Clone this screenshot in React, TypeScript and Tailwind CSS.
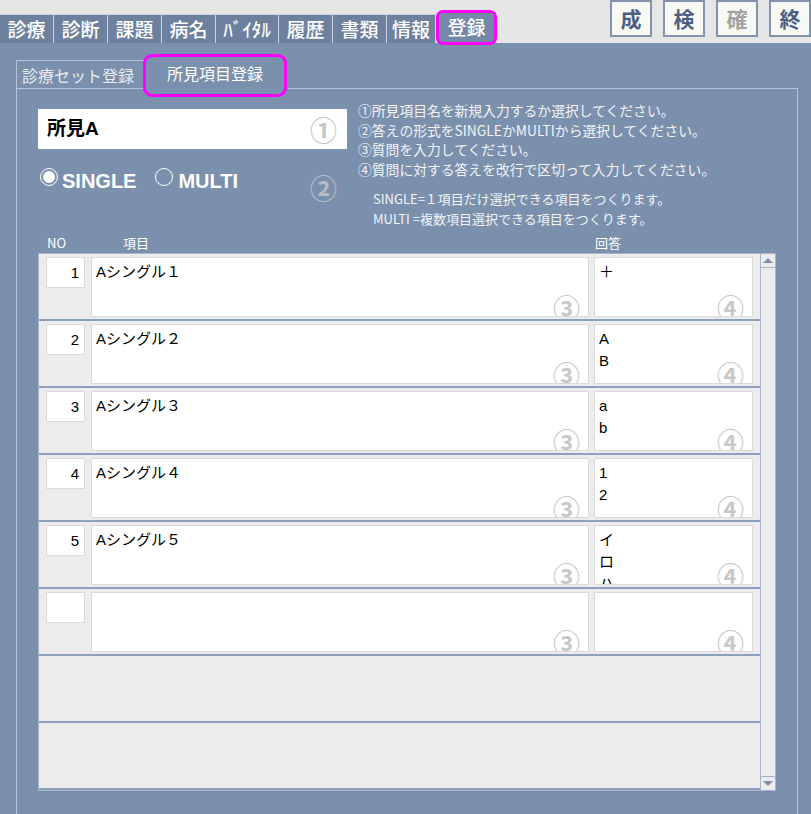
import * as React from 'react';

const tabs = [
  { label: '診療', w: 'w-[54px]' },
  { label: '診断', w: 'w-[54px]' },
  { label: '課題', w: 'w-[54px]' },
  { label: '病名', w: 'w-[54px]' },
  { label: 'ﾊﾞｲﾀﾙ', w: 'w-[63px]' },
  { label: '履歴', w: 'w-[54px]' },
  { label: '書類', w: 'w-[54px]' },
  { label: '情報', w: 'w-[49px]' },
];

const rows: { no: string; item: string; answers: string[]; boxes: boolean }[] = [
  { no: '1', item: 'Aシングル１', answers: ['＋'], boxes: true },
  { no: '2', item: 'Aシングル２', answers: ['A', 'B'], boxes: true },
  { no: '3', item: 'Aシングル３', answers: ['a', 'b'], boxes: true },
  { no: '4', item: 'Aシングル４', answers: ['1', '2'], boxes: true },
  { no: '5', item: 'Aシングル５', answers: ['イ', 'ロ', 'ハ'], boxes: true },
  { no: '', item: '', answers: [], boxes: true },
  { no: '', item: '', answers: [], boxes: false },
  { no: '', item: '', answers: [], boxes: false },
];

const Row = ({ row }: { row: (typeof rows)[number] }) => {
  return (
    <div className="h-[67px] border-b-2 border-[#8da0bd] pt-[3px] pl-[7px] flex">
      {row.boxes && (
        <>
          <div className="w-[39px] h-[31px] bg-white border border-[#dadada] text-right pr-[5px] text-[15px] leading-[29px] text-black">
            {row.no}
          </div>
          <div className="relative overflow-hidden ml-[6px] w-[498px] h-[60px] bg-white border border-[#dadada] pt-[3px] pl-[4px] text-[15px] leading-[22px] text-black">
            {row.item}
            <span className="absolute right-[8px] bottom-[-5px] text-[27px] font-bold leading-none text-[#c8c8c8] font-['Noto_Sans_CJK_JP',sans-serif]">③</span>
          </div>
          <div className="relative overflow-hidden ml-[5px] w-[159px] h-[60px] bg-white border border-[#dadada] pt-[3px] pl-[4px] text-[15px] leading-[22px] text-black">
            {row.answers.map((a) => (
              <div key={a}>{a}</div>
            ))}
            <span className="absolute right-[8px] bottom-[-5px] text-[27px] font-bold leading-none text-[#c8c8c8] font-['Noto_Sans_CJK_JP',sans-serif]">④</span>
          </div>
        </>
      )}
    </div>
  );
};

const App = () => {
  return (
    <div className="w-[811px] h-[814px] overflow-hidden bg-[#7b90ad] font-['Liberation_Sans','Noto_Sans_CJK_JP',sans-serif]">
      {/* top bar */}
      <div className="h-[43px] bg-[#e6e6e6] flex items-start justify-between">
        <div className="flex items-end h-full">
          {tabs.map((t) => (
            <div
              key={t.label}
              className={`${t.w} h-[29px] bg-[#6d819f] border-r border-t border-[#c9d2de] flex items-center justify-center text-white text-[19px] font-['Noto_Sans_CJK_JP',sans-serif] font-medium`}
            >
              {t.label}
            </div>
          ))}
          <div className="relative z-10 -mb-[2px] w-[61px] h-[35px] border-[3px] border-[#ff00ff] rounded-[7px] bg-[#7489a8] flex items-center justify-center text-white text-[19px] font-['Noto_Sans_CJK_JP',sans-serif] font-medium">
            登録
          </div>
        </div>
        <div className="flex gap-[11px]">
          {['成', '検', '確', '終'].map((b) => (
            <div
              key={b}
              className={`w-[42px] h-[37px] border-2 border-[#8393ad] bg-[#f8f8f5] flex items-center justify-center text-[21px] font-bold font-['Noto_Sans_CJK_JP',sans-serif] ${b === '確' ? 'text-[#a3a3a3]' : 'text-[#4b5f82]'}`}
            >
              {b}
            </div>
          ))}
        </div>
      </div>

      {/* sub tabs */}
      <div className="pl-[16px] pt-[17px] flex items-end relative z-10">
        <div className="w-[130px] h-[28px] border-l border-t border-[#b7c3d5] pl-[5px] flex items-center text-[16px] text-[#e8ecf1] font-['Noto_Sans_CJK_JP',sans-serif]">
          診療セット登録
        </div>
        <div className="-ml-[3px] -mt-[6px] -mb-[9px] w-[144px] h-[43px] border-[3px] border-[#ff00ff] rounded-[9px] bg-[#7b90ad] flex items-center justify-center pb-[6px] text-[16px] text-white font-['Noto_Sans_CJK_JP',sans-serif]">
          所見項目登録
        </div>
      </div>

      {/* panel */}
      <div className="ml-[16px] w-[782px] h-[726px] border border-b-0 border-[#b7c3d5] pl-[21px] pt-[20px]">
        <div className="h-[126px] flex">
          <div className="w-[309px]">
            <div className="h-[40px] bg-white flex items-center justify-between pl-[9px] pr-[10px]">
              <span className="text-[19px] font-bold text-black">所見A</span>
              <span className="text-[27px] font-bold leading-none text-[#c6c6c6] font-['Noto_Sans_CJK_JP',sans-serif]">①</span>
            </div>
            <div className="mt-[19px] flex items-start">
              <div className="ml-[2px] w-[18px] h-[18px] rounded-full border-[1.5px] border-white flex items-center justify-center">
                <div className="w-[12px] h-[12px] rounded-full bg-white" />
              </div>
              <span className="ml-[4px] mt-[2px] text-[20px] leading-[22px] font-bold text-white">SINGLE</span>
              <div className="ml-[19px] w-[18px] h-[18px] rounded-full border-[1.5px] border-white" />
              <span className="ml-[5px] mt-[2px] text-[20px] leading-[22px] font-bold text-white">MULTI</span>
              <span className="ml-auto mr-[10px] mt-[6px] text-[27px] font-bold leading-none text-[#b6bcc6] font-['Noto_Sans_CJK_JP',sans-serif]">②</span>
            </div>
          </div>
          <div className="ml-[11px] -mt-[8px] text-[#f2f4f7] font-['Noto_Sans_CJK_JP',sans-serif]">
            <div className="text-[13.8px] leading-[19.5px]">
              <div>①所見項目名を新規入力するか選択してください。</div>
              <div>②答えの形式をSINGLEかMULTIから選択してください。</div>
              <div>③質問を入力してください。</div>
              <div>④質問に対する答えを改行で区切って入力してください。</div>
            </div>
            <div className="mt-[10px] pl-[15px] text-[13px] leading-[20px]">
              <div>SINGLE=１項目だけ選択できる項目をつくります。</div>
              <div>MULTI =複数項目選択できる項目をつくります。</div>
            </div>
          </div>
        </div>

        {/* header */}
        <div className="h-[18px] flex text-[13px] leading-[16px] text-white font-['Noto_Sans_CJK_JP',sans-serif]">
          <span className="w-[85px] pl-[9px]">NO</span>
          <span className="w-[472px]">項目</span>
          <span>回答</span>
        </div>

        {/* list */}
        <div className="w-[738px] h-[538px] flex border border-[#a6b5cb]">
          <div className="w-[722px] bg-[#ececec] border-r border-[#a6b5cb]">
            {rows.map((r, i) => (
              <Row key={i} row={r} />
            ))}
          </div>
          <div className="w-[14px] bg-[#ececec] flex flex-col justify-between">
            <div className="h-[14px] border-b border-[#a6b5cb] flex items-center justify-center">
              <div className="w-0 h-0 border-l-[5px] border-r-[5px] border-b-[5px] border-l-transparent border-r-transparent border-b-[#7d91ae]" />
            </div>
            <div className="h-[14px] border-t border-[#a6b5cb] flex items-center justify-center">
              <div className="w-0 h-0 border-l-[5px] border-r-[5px] border-t-[5px] border-l-transparent border-r-transparent border-t-[#7d91ae]" />
            </div>
          </div>
        </div>
      </div>
    </div>
  );
};

export default App;
